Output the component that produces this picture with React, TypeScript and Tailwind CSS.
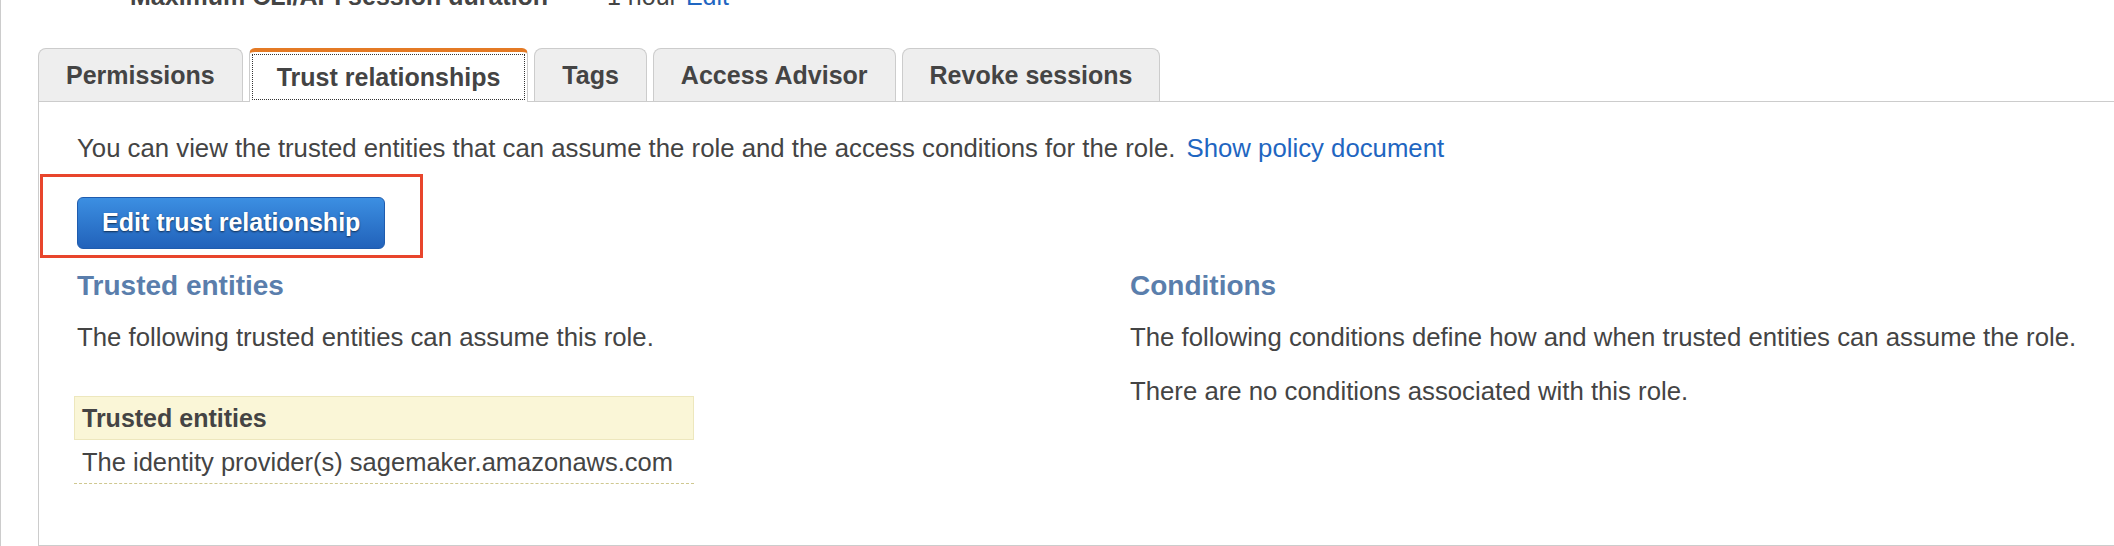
import React from "react";

const tabs = ["Permissions", "Trust relationships", "Tags", "Access Advisor", "Revoke sessions"];

export default function App() {
  const active = "Trust relationships";

  return (
    <div className="relative h-[546px] w-full overflow-hidden border-l border-[#cccccc] bg-white font-['Liberation_Sans',Arial,sans-serif] text-[#444444]">
      {/* summary row cut off at the top */}
      <div className="-mt-[19px] flex h-[30px] items-center pl-[129px] text-[25px] leading-[30px]">
        <span className="w-[477px] font-bold">Maximum CLI/API session duration</span>
        <span>1 hour</span>
        <a className="ml-[8px] text-[#1f66c1]">Edit</a>
      </div>

      <div className="ml-[37px] mt-[37px]">
        <div className="flex items-end gap-[6px]">
          {tabs.map((t) =>
            t === active ? (
              <div
                key={t}
                className="relative z-10 -mb-px h-[54px] rounded-t-[6px] border border-b-0 border-t-[4px] border-[#cccccc] border-t-[#e47a25] bg-white p-[2px]"
              >
                <div className="flex h-full items-center border border-dotted border-[#333333] px-[24px] text-[25px] font-bold leading-[30px]">
                  {t}
                </div>
              </div>
            ) : (
              <div
                key={t}
                className="flex h-[53px] items-center rounded-t-[8px] border border-b-0 border-[#cccccc] bg-[#eeeeee] px-[27px] text-[25px] font-bold leading-[30px]"
              >
                {t}
              </div>
            )
          )}
        </div>

        <div className="h-[445px] border border-r-0 border-[#cccccc] pl-[38px] pt-[31px]">
          <p className="text-[25.75px] leading-[30px]">
            You can view the trusted entities that can assume the role and the access conditions for the role.{" "}
            <a className="ml-[4px] text-[#1f66c1]">Show policy document</a>
          </p>

          <div className="relative mt-[34px] w-fit">
            <button className="h-[52px] rounded-[6px] border border-[#1f5cae] bg-gradient-to-b from-[#3c8fe2] to-[#2262ba] px-[24px] text-[25px] font-bold text-white [text-shadow:0_1px_2px_rgba(0,0,0,0.6)]">
              Edit trust relationship
            </button>
            <div className="pointer-events-none absolute -bottom-[9px] -left-[37px] -right-[38px] -top-[23px] border-[3px] border-[#e8452c]" />
          </div>

          <div className="mt-[21px] grid grid-cols-[1053px_1fr]">
            <div>
              <h3 className="text-[28px] font-bold leading-[32px] text-[#5a7eac]">Trusted entities</h3>
              <p className="mt-[20px] text-[25.75px] leading-[30px]">The following trusted entities can assume this role.</p>

              <div className="mt-[44px] w-[620px] -ml-[3px]">
                <div className="flex h-[44px] items-center border border-[#ede7bd] bg-[#faf6d7] pl-[7px] text-[25px] font-bold leading-[30px]">
                  Trusted entities
                </div>
                <div className="flex h-[44px] items-center border-b border-dashed border-[#cfc890] pl-[8px] text-[25.5px] leading-[30px]">
                  The identity provider(s) sagemaker.amazonaws.com
                </div>
              </div>
            </div>

            <div>
              <h3 className="text-[28px] font-bold leading-[32px] text-[#5a7eac]">Conditions</h3>
              <p className="mt-[20px] text-[25.75px] leading-[30px]">
                The following conditions define how and when trusted entities can assume the role.
              </p>
              <p className="mt-[24px] text-[25.75px] leading-[30px]">There are no conditions associated with this role.</p>
            </div>
          </div>
        </div>
      </div>
    </div>
  );
}
